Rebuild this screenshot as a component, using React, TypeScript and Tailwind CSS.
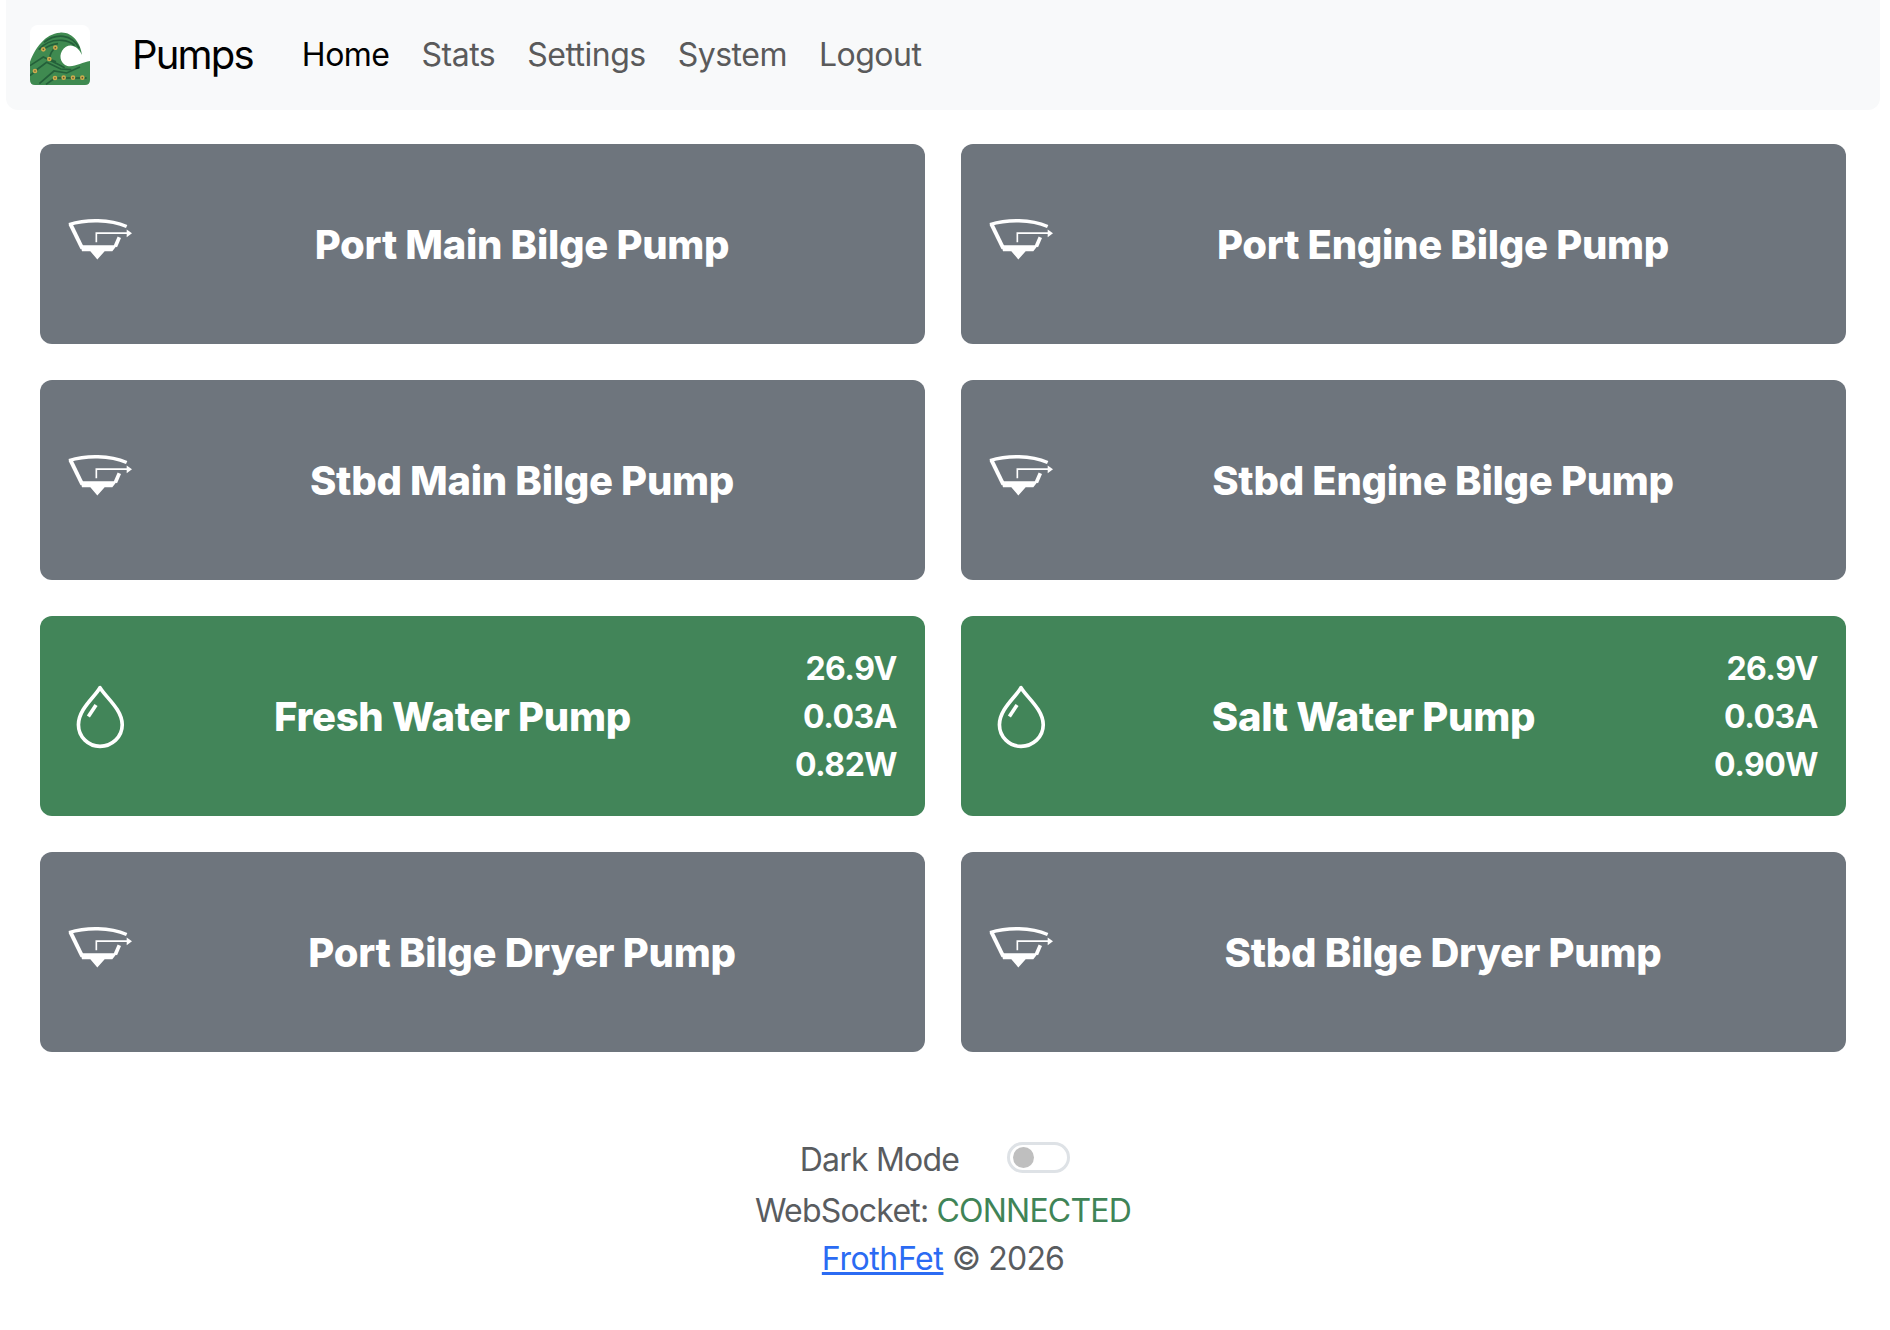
import React from 'react';

const sans = 'font-["Inter","Liberation_Sans",sans-serif]';

const BilgeIcon = () => (
  <svg viewBox="55 55 192 128" width="64" height="43" fill="none" stroke="white" className="mb-[10px] shrink-0">
    <path d="M62 72 L98 146" strokeWidth="12" />
    <path d="M197 140 L209 112" strokeWidth="11" />
    <path d="M58 74 C 110 58 180 58 231 80" strokeWidth="10" />
    <path d="M92 136 H202 L188 154 H165 L143 179 L122 154 H97 Z" fill="white" stroke="none" />
    <path d="M140 127 V100 H232" strokeWidth="5" />
    <path d="M231 89 L247 100 L231 112 Z" fill="white" stroke="none" />
  </svg>
);

const DropIcon = () => (
  <svg viewBox="119 222 180 196" width="60" height="65" fill="none" stroke="white" strokeWidth="11" className="shrink-0 ml-[2px]">
    <path d="M209 233 C 195 260 144 297 144 345 C 144 382 174 410 209 410 C 245 410 276 382 276 345 C 276 298 224 260 209 233 Z" strokeLinejoin="round" />
    <path d="M174 320 L197 285" />
  </svg>
);

const Logo = () => (
  <svg viewBox="0 0 180 180" width="60" height="60" className="shrink-0">
    <rect width="180" height="180" rx="24" fill="white" />
    <path d="M0 110 C 15 70 45 26 90 23 C 128 20 152 55 156 90 C 146 66 125 55 108 65 C 88 78 85 105 105 120 C 125 132 155 112 180 108 V165 Q180 180 165 180 H15 Q0 180 0 165 Z" fill="#3f8a50" />
    <g fill="none" stroke="#24603a" strokeWidth="5">
      <path d="M42 52 C 62 36 84 32 100 34 C 122 37 138 50 148 70" />
      <path d="M26 74 C 44 54 70 44 96 46 C 112 47 126 54 134 62" />
      <path d="M40 73 C 52 64 66 58 84 56" />
      <path d="M58 102 L78 110" />
      <path d="M58 102 C 60 88 66 76 76 68" />
      <path d="M0 122 L40 96 L84 118 L104 128" />
      <path d="M15 138 L50 112 L92 132 L124 134" />
      <path d="M28 176 L72 138 L110 144 L150 126" />
      <path d="M48 178 L75 159" />
      <path d="M75 159 H170" />
      <path d="M0 152 L22 134" />
    </g>
    <g fill="#d0ad4e">
      <circle cx="40" cy="73" r="7" />
      <circle cx="76" cy="68" r="7" />
      <circle cx="58" cy="102" r="7" />
      <circle cx="15" cy="138" r="7" />
      <circle cx="75" cy="159" r="7" />
      <circle cx="101" cy="158" r="7" />
      <circle cx="129" cy="158" r="7" />
      <circle cx="157" cy="158" r="7" />
    </g>
    <g fill="#5a5a32">
      <circle cx="40" cy="73" r="2.5" />
      <circle cx="76" cy="68" r="2.5" />
      <circle cx="58" cy="102" r="2.5" />
      <circle cx="15" cy="138" r="2.5" />
      <circle cx="75" cy="159" r="2.5" />
      <circle cx="101" cy="158" r="2.5" />
      <circle cx="129" cy="158" r="2.5" />
      <circle cx="157" cy="158" r="2.5" />
    </g>
  </svg>
);

const Card = ({ title }: { title: string }) => (
  <div className="h-[200px] rounded-xl bg-[#6e757d] flex items-center pl-7 pr-7 text-white">
    <BilgeIcon />
    <div className="flex-1 pl-[15px] pt-[2px] text-center text-[40px] leading-[48px] font-extrabold tracking-[-0.3px]">{title}</div>
  </div>
);

const RunningCard = ({ title, stats }: { title: string; stats: string[] }) => (
  <div className="h-[200px] rounded-xl bg-[#428559] flex items-center pl-7 pr-7 text-white">
    <DropIcon />
    <div className="flex-1 pl-[20px] pt-[2px] text-center text-[40px] leading-[48px] font-extrabold tracking-[-0.3px]">{title}</div>
    <div className="w-[142px] pt-[2px] text-right text-[32px] leading-[48px] font-bold tracking-[-0.5px]">
      {stats.map((s) => (
        <div key={s}>{s}</div>
      ))}
    </div>
  </div>
);

export default function App() {
  return (
    <div className={`${sans} min-h-[1330px] bg-white text-[#595c5f]`}>
      <nav className="ml-[6px] mr-[10px] h-[110px] rounded-b-xl bg-[#f8f9fa] flex items-center pl-6">
        <Logo />
        <a className="ml-[42px] mr-[33px] text-[40px] tracking-[-1.8px] text-black">Pumps</a>
        <ul className="flex text-[32px] tracking-[-0.5px]">
          <li className="px-4 text-black">Home</li>
          <li className="px-4 text-[#5a5a5b]">Stats</li>
          <li className="px-4 text-[#5a5a5b]">Settings</li>
          <li className="px-4 text-[#5a5a5b]">System</li>
          <li className="px-4 text-[#5a5a5b]">Logout</li>
        </ul>
      </nav>

      <main className="grid grid-cols-2 gap-9 pl-10 pr-11 pt-[34px]">
        <Card title="Port Main Bilge Pump" />
        <Card title="Port Engine Bilge Pump" />
        <Card title="Stbd Main Bilge Pump" />
        <Card title="Stbd Engine Bilge Pump" />
        <RunningCard title="Fresh Water Pump" stats={['26.9V', '0.03A', '0.82W']} />
        <RunningCard title="Salt Water Pump" stats={['26.9V', '0.03A', '0.90W']} />
        <Card title="Port Bilge Dryer Pump" />
        <Card title="Stbd Bilge Dryer Pump" />
      </main>

      <footer className="mt-[81px] pr-1 text-center text-[32px] leading-[48px] tracking-[-0.8px]">
        <div className="flex h-[54px] items-center justify-center pr-4">
          <span>Dark Mode</span>
          <span className="ml-12 mb-[6px] flex h-[31px] w-[63px] items-center rounded-full border-[3px] border-[#dee2e6] bg-white pl-[3px]">
            <span className="h-[21px] w-[21px] rounded-full bg-[#bfbfbf]" />
          </span>
        </div>
        <div>
          WebSocket: <span className="text-[#3f8457]">CONNECTED</span>
        </div>
        <div>
          <a className="text-[#2b6bf3] underline tracking-[-0.4px]">FrothFet</a> © 2026
        </div>
      </footer>
    </div>
  );
}
